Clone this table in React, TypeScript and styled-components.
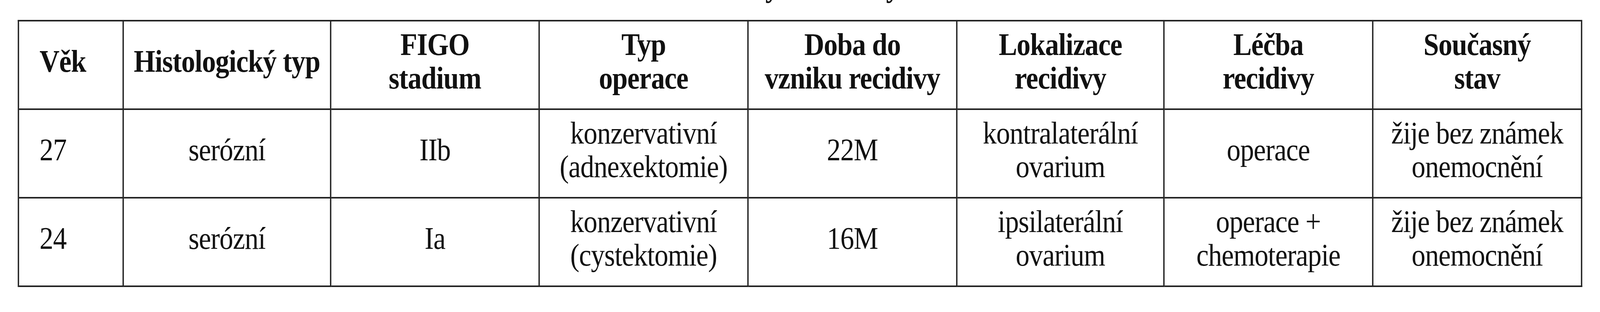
import React from 'react';
import styled, {createGlobalStyle} from 'styled-components';

const PAGE_W = 4689;

const GlobalStyle = createGlobalStyle`
  html, body {
    margin: 0;
    padding: 0;
    background: #fff;
    overflow: hidden;
  }
  body {
    font-family: "Liberation Serif", "Times New Roman", serif;
    color: #111;
  }
`;

// the page is laid out at the reference width and squeezed to the window
const Page = styled.div`
  width: ${PAGE_W}px;
  height: 800px;
  padding-left: 52px;
  box-sizing: border-box;
  transform-origin: 0 0;
`;

// only the bottom of the caption line is left in the crop
const CaptionTail = styled.div`
  height: 51px;
  overflow: hidden;
  display: flex;
  align-items: flex-start;
  font-size: 81px;
  font-weight: bold;
  line-height: 81px;
`;

const Tail = styled.span<{ $offset: number }>`
  margin-left: ${p => p.$offset}px;
  margin-top: -76px;
`;

const Table = styled.table`
  width: 4585px;
  table-layout: fixed;
  border-collapse: separate;
  border-spacing: 0;
  border-left: 4px solid #232323;
  border-top: 4px solid #232323;
  font-size: 81px;
  line-height: 86px;
  letter-spacing: -1.2px;
`;

const Row = styled.tr`
  height: 227px;
`;

const Cell = styled.td<{ $left?: boolean; $head?: boolean; $w?: number }>`
  box-sizing: border-box;
  height: 227px;
  ${p => p.$w ? `width: ${p.$w}px;` : ''}
  border-right: 4px solid #232323;
  border-bottom: 4px solid #232323;
  padding: 0 0 20px ${p => p.$left ? '60px' : '0'};
  text-align: ${p => p.$left ? 'left' : 'center'};
  vertical-align: middle;
  white-space: nowrap;
  font-weight: ${p => p.$head ? 'bold' : 'normal'};
`;

const widths = [307, 608, 611, 612, 612, 607, 612, 612];

const header: string[][] = [
    ['Věk'],
    ['Histologický typ'],
    ['FIGO', 'stadium'],
    ['Typ', 'operace'],
    ['Doba do', 'vzniku recidivy'],
    ['Lokalizace', 'recidivy'],
    ['Léčba', 'recidivy'],
    ['Současný', 'stav'],
];

const rows: string[][][] = [
    [['27'], ['serózní'], ['IIb'], ['konzervativní', '(adnexektomie)'], ['22M'],
        ['kontralaterální', 'ovarium'], ['operace'], ['žije bez známek', 'onemocnění']],
    [['24'], ['serózní'], ['Ia'], ['konzervativní', '(cystektomie)'], ['16M'],
        ['ipsilaterální', 'ovarium'], ['operace +', 'chemoterapie'], ['žije bez známek', 'onemocnění']],
];

const Lines: React.FC<{ lines: string[] }> = ({lines}) => (
    <>
        {lines.map((l, i) => (
            <React.Fragment key={i}>
                {i > 0 && <br/>}
                {l}
            </React.Fragment>
        ))}
    </>
);

const App: React.FC = () => {
    // window may be narrower than the reference, so squeeze horizontally
    const scale = Math.min(1, (typeof window !== 'undefined' ? window.innerWidth : PAGE_W) / PAGE_W);
    return (
        <Page style={{transform: `scaleX(${scale})`}}>
            <GlobalStyle/>
            <CaptionTail>
                <Tail $offset={2191}>y</Tail>
                <Tail $offset={313}>y</Tail>
            </CaptionTail>
            <Table>
                <thead>
                <Row>
                    {header.map((h, i) => (
                        <Cell as="th" key={i} $head $left={i === 0} $w={widths[i]}>
                            <Lines lines={h}/>
                        </Cell>
                    ))}
                </Row>
                </thead>
                <tbody>
                {rows.map((r, ri) => (
                    <Row key={ri}>
                        {r.map((c, ci) => (
                            <Cell key={ci} $left={ci === 0}>
                                <Lines lines={c}/>
                            </Cell>
                        ))}
                    </Row>
                ))}
                </tbody>
            </Table>
        </Page>
    );
};

export default App;
